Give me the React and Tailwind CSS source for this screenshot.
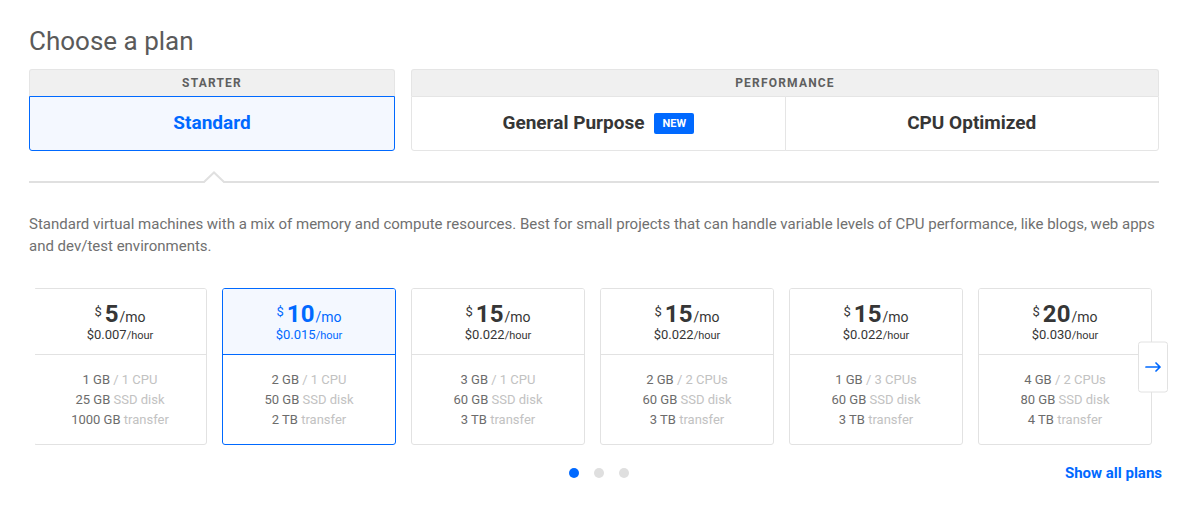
import { useState } from "react";

const plans = [
  { monthly: "5", hourly: "$0.007", memory: "1 GB", cpu: "1 CPU", disk: "25 GB", transfer: "1000 GB" },
  { monthly: "10", hourly: "$0.015", memory: "2 GB", cpu: "1 CPU", disk: "50 GB", transfer: "2 TB" },
  { monthly: "15", hourly: "$0.022", memory: "3 GB", cpu: "1 CPU", disk: "60 GB", transfer: "3 TB" },
  { monthly: "15", hourly: "$0.022", memory: "2 GB", cpu: "2 CPUs", disk: "60 GB", transfer: "3 TB" },
  { monthly: "15", hourly: "$0.022", memory: "1 GB", cpu: "3 CPUs", disk: "60 GB", transfer: "3 TB" },
  { monthly: "20", hourly: "$0.030", memory: "4 GB", cpu: "2 CPUs", disk: "80 GB", transfer: "4 TB" },
];

function GroupHeader({ children }) {
  return (
    <h2 className="flex h-[27px] items-center justify-center rounded-t-[3px] border border-b-0 border-[#e5e5e5] bg-[#f0f0f0] text-xs font-bold tracking-widest text-[#5f5f5f]">
      {children}
    </h2>
  );
}

function TypeButton({ selected, className, children, onClick }) {
  const state = selected
    ? "border-[#0069ff] bg-[#f4f8ff] text-[#0069ff]"
    : "border-[#e5e5e5] bg-white text-[#363636]";
  return (
    <button
      type="button"
      aria-pressed={selected}
      onClick={onClick}
      className={`flex h-[55px] flex-1 cursor-pointer items-center justify-center gap-[10px] border text-[19px] font-bold ${state} ${className}`}
    >
      {children}
    </button>
  );
}

function PlanCard({ plan, selected, onClick }) {
  const edge = selected ? "border-[#0069ff]" : "border-[#e2e2e2]";
  const head = selected ? "bg-[#f4f8ff] text-[#0069ff]" : "bg-white text-[#363636]";
  return (
    <button
      type="button"
      aria-pressed={selected}
      onClick={onClick}
      className={`flex min-w-0 cursor-pointer flex-col overflow-hidden rounded-[3px] border text-center ${edge}`}
    >
      <span className={`flex h-[66px] w-full flex-col items-center border-b pt-[13px] ${edge} ${head}`}>
        <span className="flex h-[25px] items-baseline leading-6">
          <span className="mr-[3px] self-start text-[13px] leading-5">$</span>
          <span className="text-2xl leading-6 font-bold">{plan.monthly}</span>
          <span className="ml-px text-sm">/mo</span>
        </span>
        <span className="text-[13px] leading-4">
          {plan.hourly}
          <span className="text-[11px]">/hour</span>
        </span>
      </span>
      <span className="flex w-full flex-col pt-[15px] pb-[14px] text-[13px] leading-5 text-[#c2c2c2]">
        <span>
          <span className="text-[#6c6c6c]">{plan.memory}</span> / {plan.cpu}
        </span>
        <span>
          <span className="text-[#6c6c6c]">{plan.disk}</span> SSD disk
        </span>
        <span>
          <span className="text-[#6c6c6c]">{plan.transfer}</span> transfer
        </span>
      </span>
    </button>
  );
}

export default function App() {
  const [type, setType] = useState("standard");
  const [selectedPlan, setSelectedPlan] = useState(1);
  const [page, setPage] = useState(0);

  return (
    <main className="bg-white pt-6 pr-[41px] pb-10 pl-[29px] font-['Roboto',sans-serif]">
      <h1 className="text-[26px] leading-[34px] text-[#5a5a5a]">Choose a plan</h1>

      <div className="mt-[11px] grid grid-cols-3 gap-4">
        <section>
          <GroupHeader>STARTER</GroupHeader>
          <div className="flex">
            <TypeButton
              selected={type === "standard"}
              onClick={() => setType("standard")}
              className="rounded-b-[3px]"
            >
              Standard
            </TypeButton>
          </div>
        </section>
        <section className="col-span-2">
          <GroupHeader>PERFORMANCE</GroupHeader>
          <div className="flex">
            <TypeButton
              selected={type === "general"}
              onClick={() => setType("general")}
              className="rounded-bl-[3px]"
            >
              General Purpose
              <span className="rounded-[2px] bg-[#0069ff] px-2 text-[11px] leading-[21px] text-white">NEW</span>
            </TypeButton>
            <TypeButton
              selected={type === "cpu"}
              onClick={() => setType("cpu")}
              className="-ml-px rounded-br-[3px]"
            >
              CPU Optimized
            </TypeButton>
          </div>
        </section>
      </div>

      <div className="relative mt-[30px] border-b-2 border-[#e0e0e0]">
        <svg
          className="absolute -top-[10px] left-[16.4%] -translate-x-1/2"
          width="22"
          height="12"
          viewBox="0 0 22 12"
          fill="none"
          aria-hidden="true"
        >
          <path d="M1 12 11 2l10 10z" fill="#ffffff" />
          <path d="M0 11h1L11 1.5 21 11h1" stroke="#e0e0e0" strokeWidth="2" />
        </svg>
      </div>

      <p className="mt-[30px] text-[15px] leading-[22px] text-[#707070]">
        Standard virtual machines with a mix of memory and compute resources. Best for small projects that can handle
        variable levels of CPU performance, like blogs, web apps and dev/test environments.
      </p>

      <div className="relative mt-[31px] mr-[7px] ml-[6px]">
        <div className="overflow-hidden">
          <div className="-ml-[2px] grid grid-cols-6 gap-[15px]">
            {plans.map((plan, index) => (
              <PlanCard
                key={index}
                plan={plan}
                selected={index === selectedPlan}
                onClick={() => setSelectedPlan(index)}
              />
            ))}
          </div>
        </div>
        <button
          type="button"
          aria-label="Next plans"
          onClick={() => setPage((page + 1) % 3)}
          className="absolute top-1/2 -right-4 flex h-[51px] w-[30px] -translate-y-1/2 cursor-pointer items-center justify-center rounded-[3px] border border-[#e2e2e2] bg-white"
        >
          <svg width="16" height="12" viewBox="0 0 16 12" fill="none" stroke="#0069ff" strokeWidth="1.7" aria-hidden="true">
            <path d="M1 6.5h14M11 2.5l4 4-4 4" strokeLinejoin="round" strokeLinecap="round" />
          </svg>
        </button>
      </div>

      <div className="-mr-[3px] mt-[18px] ml-[7px] grid grid-cols-[1fr_auto_1fr] items-center">
        <div className="col-start-2 flex gap-[15px]">
          {[0, 1, 2].map((dot) => (
            <button
              key={dot}
              type="button"
              aria-label={`Page ${dot + 1}`}
              onClick={() => setPage(dot)}
              className={`size-[10px] cursor-pointer rounded-full ${dot === page ? "bg-[#0069ff]" : "bg-[#dfdfdf]"}`}
            />
          ))}
        </div>
        <a href="#plans" className="justify-self-end text-[15px] leading-5 font-bold text-[#0069ff]">
          Show all plans
        </a>
      </div>
    </main>
  );
}
